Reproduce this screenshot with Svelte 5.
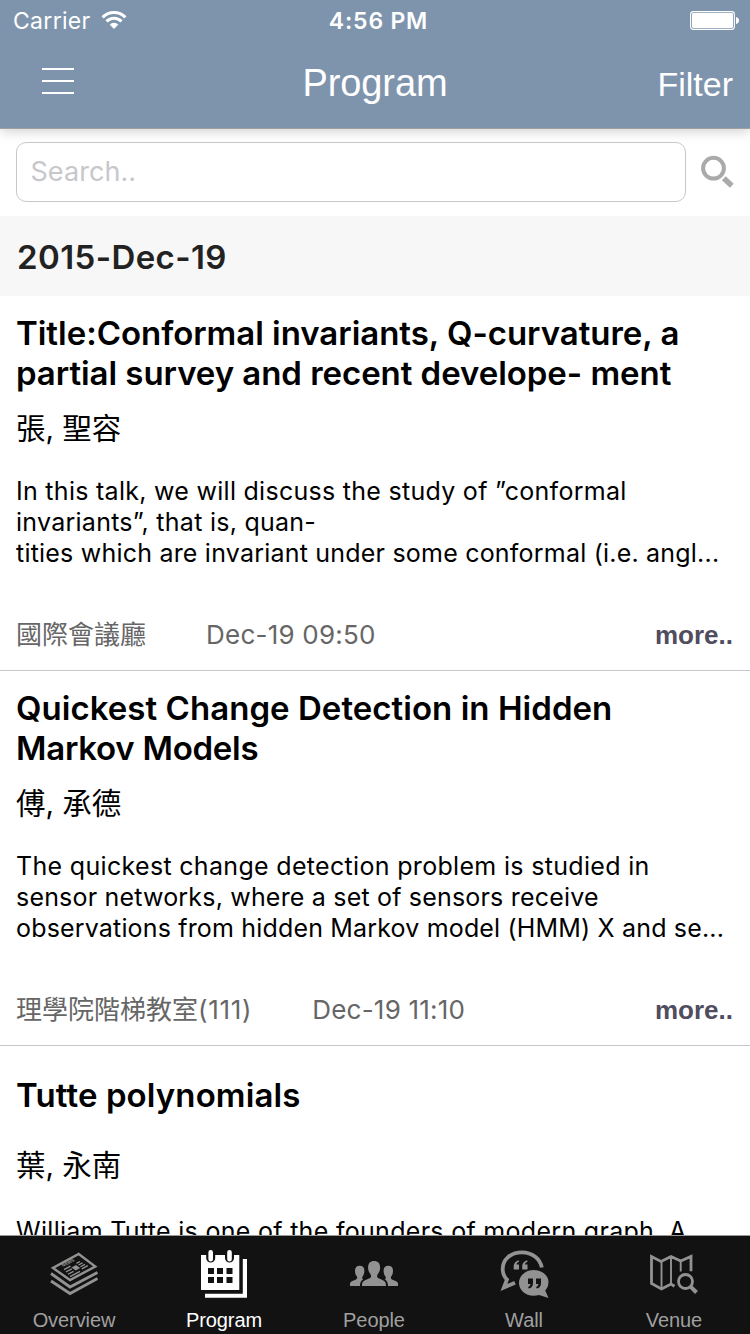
<script>
  const talks = [
    {
      title: [
        ['Title:Conformal invariants, Q-curvature, a', -0.03],
        ['partial survey and recent develope- ment', -0.05]
      ],
      author: '張, 聖容',
      text: [
        ['In this talk, we will discuss the study of ”conformal', 0.28],
        ['invariants”, that is, quan-', 0.26],
        ['tities which are invariant under some conformal (i.e. angl...', 0.21]
      ],
      venue: '國際會議廳',
      date: 'Dec-19 09:50'
    },
    {
      title: [
        ['Quickest Change Detection in Hidden', 0.04],
        ['Markov Models', -0.25]
      ],
      author: '傅, 承德',
      text: [
        ['The quickest change detection problem is studied in', 0.32],
        ['sensor networks, where a set of sensors receive', 0.19],
        ['observations from hidden Markov model (HMM) X and se...', 0.17]
      ],
      venue: '理學院階梯教室',
      room: '(111)',
      date: 'Dec-19 11:10'
    },
    {
      title: [['Tutte polynomials', 0.1]],
      author: '葉, 永南',
      text: [['William Tutte is one of the founders of modern graph. A', 0.3]],
      single: true
    }
  ];
  const tabs = ['Overview', 'Program', 'People', 'Wall', 'Venue'];
</script>

<div class="screen">
  <header>
    <div class="status">
      <div class="carrier">
        <span>Carrier</span>
        <svg width="26" height="20" viewBox="0 0 26 20">
          <g fill="none" stroke="#fff" stroke-width="3.1">
            <path d="M1.6 7.3a16 16 0 0 1 22.8 0" />
            <path d="M5.5 11.3a10.6 10.6 0 0 1 15 0" />
          </g>
          <path d="M13 18.9l-4.3-4.4a6.2 6.2 0 0 1 8.6 0z" fill="#fff" />
        </svg>
      </div>
      <span class="clock">4:56 PM</span>
      <svg class="battery" width="50" height="20" viewBox="0 0 50 20">
        <rect x=".6" y=".6" width="43.8" height="17.8" rx="2.8" fill="none" stroke="#fff" stroke-width="1.1" />
        <rect x="2" y="2" width="41" height="15" rx="1.4" fill="#fff" />
        <path d="M46 6c2 .3 3 1.700 3 3.500s-1 3.200-3 3.500z" fill="#fff" />
      </svg>
    </div>
    <nav>
      <div class="burger"><i></i><i></i><i></i></div>
      <h1>Program</h1>
      <span class="filter">Filter</span>
    </nav>
  </header>

  <div class="search">
    <div class="field">Search..</div>
    <svg width="34" height="34" viewBox="0 0 34 34" fill="none" stroke="#aaa">
      <circle cx="12.500" cy="13.200" r="10.400" stroke-width="4" />
      <path d="M22.800 23.200l8 7.500" stroke-width="5.500" />
    </svg>
  </div>

  <h2>2015-Dec-19</h2>

  <main>
    {#each talks as talk}
      <article class:single={talk.single}>
        <h3>{#each talk.title as [line, tracking]}<span style="letter-spacing: {tracking}px">{line}</span>{/each}</h3>
        <div class="author">{talk.author}</div>
        <p>{#each talk.text as [line, tracking]}<span style="letter-spacing: {tracking}px">{line}</span>{/each}</p>
        {#if talk.venue}
          <div class="meta">
            <span>{talk.venue}</span>{#if talk.room}<span class="room">{talk.room}</span>{/if}
            <span class="date">{talk.date}</span>
            <b>more..</b>
          </div>
        {/if}
      </article>
    {/each}
  </main>

  <footer>
    {#each tabs as tab}
      <div class="tab" class:active={tab === 'Program'}>
        <svg width="50" height="50" viewBox="0 0 50 50">
          {#if tab === 'Overview'}
            <g fill="none" stroke="currentColor">
              <path d="M28.700 4L45.300 16.500 20 30 3 18z" stroke-width="2.400" />
              <path d="M1 23.500L20 37l27.500-14.500M1 31l19 12.500L47.500 28.500" stroke-width="2.800" />
              <path d="M14 19.600l6.500-3.400M15.800 22l6-3.100M18 24.300l5.500-2.900M20 26.600l10-5.200M26.500 13.300l3.500-1.800M28.500 15l4-2.100M30.500 16.800l4.500-2.400M31.800 18.800l6-3.100" stroke-width="1.300" />
            </g>
            <path d="M21.500 17.500l4.500-2.400 4.200 2.900-4.500 2.500z" fill="currentColor" />
            <text x="0" y="0" font-size="5" font-weight="700" fill="currentColor" transform="translate(13 17) rotate(-27) skewX(10) scale(.9 .9)">NEWS</text>
          {:else if tab === 'Program'}
            <path d="M1 5h38.300v35H1z" fill="currentColor" />
            <path d="M47 9v38.800H5v-4h37.800V9z" fill="currentColor" />
            <path d="M8 18h6v6H8zm9 0h6v6h-6zm9.500 0h6v6h-6zM8 27h6v6H8zm9 0h6v6h-6zm9.500 0h6v6h-6z" fill="#121212" />
            <path d="M10.700 3v5M29.500 3v5" fill="none" stroke="#121212" stroke-width="9" stroke-linecap="round" />
            <path d="M10.700 2.300v6.900M29.500 2.300v6.900" fill="none" stroke="currentColor" stroke-width="4.600" stroke-linecap="round" />
          {:else if tab === 'People'}
            <g fill="currentColor">
              <path d="M0 36v-2.500c.3-2 2.500-2.600 6-4 1.300-.7 1.500-2 .7-3.200C5.300 24.500 5 22.800 5 20.500c0-3.200 1.700-4.800 4.700-4.800s4.700 1.600 4.700 4.800c0 2.300-.5 4.200-1.800 6-.8 1.200-.4 2.200.6 2.800-1.700 1.300-3.200 2.700-3.200 6.700z" />
              <path d="M48 36v-2.500c-.3-2-2.500-2.600-6-4-1.300-.7-1.500-2-.7-3.200 1.400-1.800 1.700-3.500 1.700-5.800 0-3.200-1.700-4.800-4.700-4.800s-4.700 1.600-4.700 4.800c0 2.300.5 4.200 1.800 6 .8 1.200.4 2.200-.6 2.800 1.700 1.300 3.200 2.700 3.200 6.700z" />
              <path d="M12 36c0-4.500 1-5 7.500-7.700 2-.9 1.900-2.600.8-4.300-1.500-2.200-2.200-3.700-2.200-6.500 0-4.400 2.200-6.500 6-6.500s6 2.100 6 6.500c0 2.800-.7 4.300-2.200 6.500-1.100 1.700-1.200 3.400.8 4.300C35 31 36 31.500 36 36z" />
            </g>
          {:else if tab === 'Wall'}
            <path d="M41.800 17.500C40 8.500 32 2.300 22 2.300 10.500 2.300 2.700 9.500 2.700 19c0 4.500 1.700 8 4.300 10.500L3.900 37.500 15 32.700" fill="none" stroke="currentColor" stroke-width="3.800" />
            <path d="M33.500 20c8.300 0 15 5 15 12 0 3.700-1.300 6.500-3.300 8.500L48.500 48l-9.500-3c-1.700.5-3.500.7-5.500.7C25.200 45.700 19 40 19 33s6.200-13 14.500-13z" fill="currentColor" />
            <path d="M18.500 10.200c-2.800 1-4.800 3-4.800 6v3.200H19v-5h-2.500c.2-1.400 1-2 2.600-2.600zM27 10.200c-2.800 1-4.800 3-4.800 6v3.200h5.300v-5H25c.2-1.400 1-2 2.600-2.600z" fill="currentColor" />
            <path d="M28 28.500h5v4.700c0 3-1.500 4.700-4.300 5.300l-.6-1.600c1.500-.6 2.200-1.500 2.300-3H28zM36 28.500h5v4.700c0 3-1.500 4.700-4.300 5.300l-.6-1.600c1.500-.6 2.200-1.500 2.300-3H36z" fill="#121212" />
          {:else}
            <g fill="none" stroke="currentColor">
              <path d="M41 21.200V6.500l-10.300 4.500L21 6.500l-10 5L1.500 6.500v27l10 5.500L21 34l3.500 2.200" stroke-width="2.800" />
              <path d="M11.500 11v27M21 7v27M30.700 11v10.500" stroke-width="1.900" />
              <circle cx="35.500" cy="31.500" r="7" stroke-width="2.800" />
              <path d="M40.300 36.300l6.200 6.200" stroke-width="4" />
            </g>
          {/if}
        </svg>
        <span>{tab}</span>
      </div>
    {/each}
  </footer>
</div>

<style>
  :global(body) { margin: 0; background: #fff; }
  .screen {
    width: 750px; height: 1334px; overflow: hidden;
    display: flex; flex-direction: column;
    font-family: Inter, "Noto Sans CJK TC", sans-serif;
    color: #000; background: #fff;
  }
  h1, h2, h3, p { margin: 0; font-weight: 400; }
  svg { display: block; flex: none; }
  header {
    height: 128px; flex: none; background: #7e94ad; color: #fff;
    border-bottom: 1px solid #a0a0a0; box-shadow: 0 2px 12px rgba(0, 0, 0, .2);
  }
  .status {
    height: 40px; display: grid; grid-template-columns: 1fr auto 1fr;
    align-items: center; padding: 0 10px 0 13px; line-height: 40px;
  }
  .carrier { display: flex; align-items: center; gap: 10px; font-size: 23px; letter-spacing: .3px; }
  .carrier span { padding-top: 2px; line-height: 38px; }
  .clock { font-size: 23px; font-weight: 600; letter-spacing: .8px; padding: 2px 0 0 4px; line-height: 38px; }
  .battery { justify-self: end; margin-top: 2px; }
  nav {
    height: 88px; display: grid; grid-template-columns: 1fr auto 1fr; align-items: center;
    padding: 0 17px; box-sizing: border-box;
  }
  .burger { display: flex; flex-direction: column; gap: 10px; width: 32px; margin-left: 25px; padding-bottom: 6px; }
  .burger i { height: 2px; background: #fff; }
  h1 { font-family: "Liberation Sans", sans-serif; font-size: 38px; line-height: 86px; padding-bottom: 2px; letter-spacing: -.1px; }
  .filter { justify-self: end; font-family: "Liberation Sans", sans-serif; font-size: 34px; }
  .search { height: 87px; flex: none; display: flex; align-items: center; padding: 0 15px 2px 16px; gap: 15px; box-sizing: border-box; }
  .field {
    width: 670px; flex: none; height: 60px; box-sizing: border-box; border: 1px solid #c8c8c8; border-radius: 10px;
    padding-left: 13.500px; font-size: 27px; line-height: 58px; letter-spacing: .05px; color: #c7c7cc;
  }
  h2 {
    height: 80px; flex: none; background: #f7f7f7; color: #222; padding: 1px 17px 0; box-sizing: border-box;
    font-size: 33px; line-height: 80px; font-weight: 600; letter-spacing: .4px;
  }
  main { height: 939px; flex: none; overflow: hidden; }
  article { height: 375px; box-sizing: border-box; padding: 17px 17px 0 16px; border-bottom: 1px solid #c8c7cc; }
  h3 span, p span { display: block; white-space: nowrap; }
  h3 { font-size: 33px; line-height: 40px; font-weight: 600; }
  .author { margin-top: 15px; font-size: 29.500px; line-height: 40px; height: 42px; }
  p { margin-top: 26px; font-size: 25px; line-height: 31px; }
  .meta { margin-top: 50px; height: 30px; display: flex; align-items: center; line-height: 30px; color: #666; font-size: 26px; }
  .meta span { padding-top: 1px; }
  .room { letter-spacing: .7px; }
  .date { margin-left: 60px; letter-spacing: .22px; }
  .meta b { margin-left: auto; font-family: "Liberation Sans", sans-serif; color: #4f4d5e; padding-top: 2px; }
  .single { padding-top: 29px; }
  .single .author { margin-top: 30px; }
  .single p { margin-top: 29px; }
  footer { height: 99px; flex: none; background: #121212; border-top: 1px solid #999; display: grid; grid-template-columns: repeat(5, 150px); box-sizing: border-box; }
  .tab {
    display: flex; flex-direction: column; align-items: center; padding: 14px 2px 0 0; color: #929292;
    font-family: "Liberation Sans", sans-serif; font-size: 20px; line-height: 24px; gap: 8px;
  }
  .tab span { color: #a0a0a0; letter-spacing: -.08px; }
  .tab svg { margin-left: 2px; }
  .tab.active, .tab.active span { color: #fff; }
</style>
